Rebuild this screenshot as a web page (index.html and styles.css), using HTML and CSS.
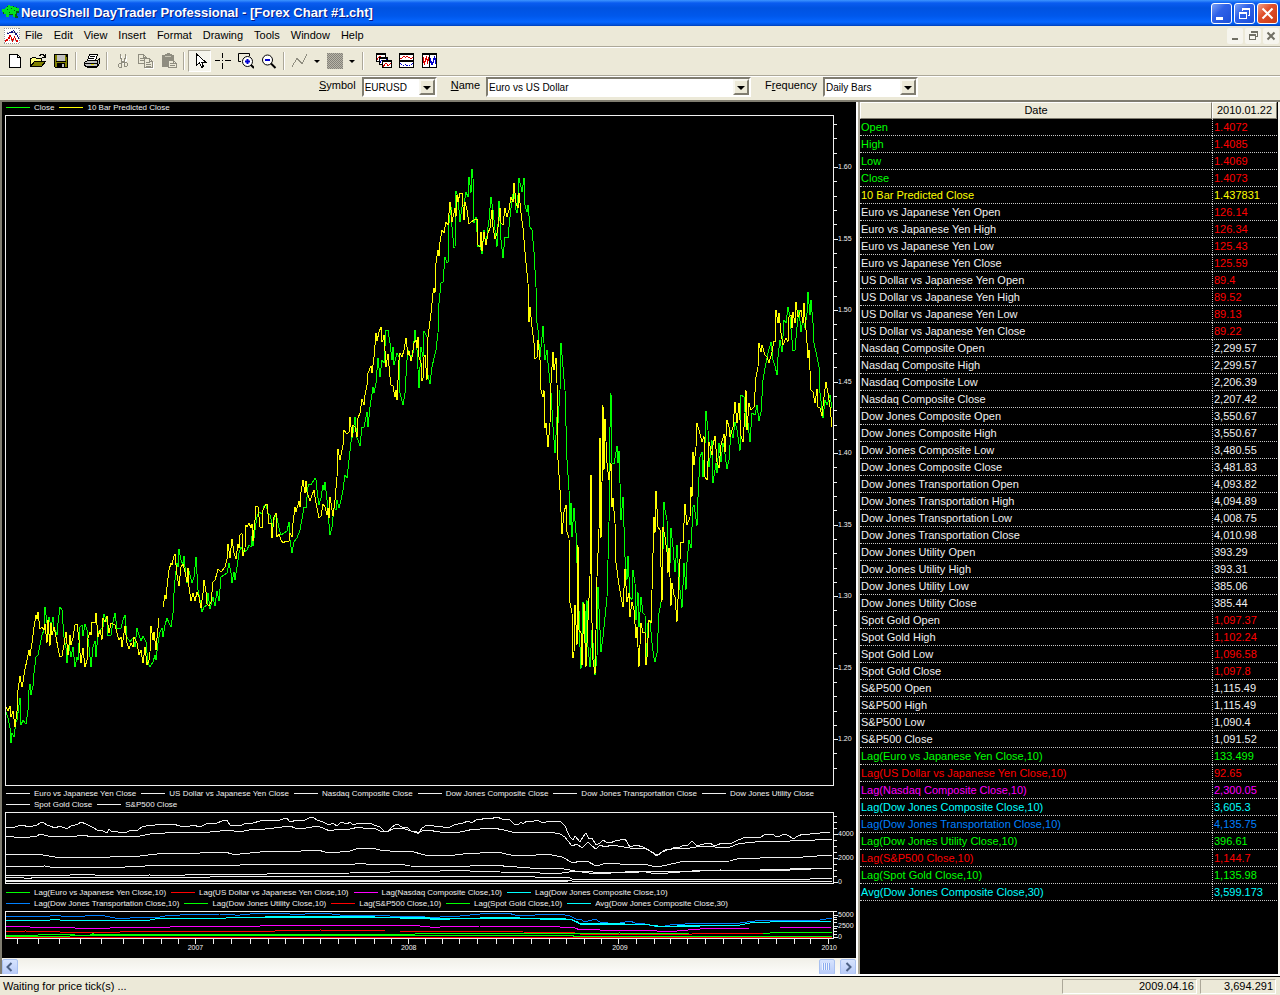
FILE: index.html
```html
<!DOCTYPE html>
<html lang="en">
<head>
    <meta charset="UTF-8">
    <meta name="viewport" content="width=device-width, initial-scale=1.0">
    <title>NeuroShell DayTrader Professional - [Forex Chart #1.cht]</title>
    <link rel="stylesheet" href="styles.css">
</head>
<body>
<div class="window">
    <header class="titlebar">
        <svg class="app-icon" width="18" height="16" viewBox="0 0 18 16">
            <path fill="#0a5a10" d="M5 2h7v1h3v2h2v4h-2v3h1v2h-3v-3H7v2H4v-3H1V7h2V4h2z"/>
            <path fill="#00e020" d="M6 1h2v1h3v1h3v1h3v3h-3v3h-1v3h-2v-3H7v3H4v-3H2V8H0V5h3V4h1V3h2z"/>
            <path fill="#005a10" d="M5 5h1v1H5zM9 4h1v1H9zM12 6h1v1h-1zM7 8h1v1H7z"/>
        </svg>
        <h1>NeuroShell DayTrader Professional - [Forex Chart #1.cht]</h1>
        <div class="window-buttons">
            <button class="win-btn" aria-label="Minimize"><svg width="17" height="17" viewBox="0 0 17 17"><path fill="#fff" d="M3 12h7v3H3z"/></svg></button>
            <button class="win-btn" aria-label="Restore"><svg width="17" height="17" viewBox="0 0 17 17"><path fill="none" stroke="#fff" d="M6.500 5.500v-1h7v6h-2M3.500 8.500h7v5h-7z"/><path fill="#fff" d="M6 3h8v2H6zM3 7h8v2H3z"/></svg></button>
            <button class="win-btn win-close" aria-label="Close"><svg class="smooth" width="17" height="17" viewBox="0 0 17 17"><path stroke="#fff" stroke-width="2" d="M3.500 3.500l10 10M13.500 3.500l-10 10"/></svg></button>
        </div>
    </header>

    <nav class="menubar">
        <svg class="doc-icon" width="16" height="16" viewBox="0 0 16 16">
            <path fill="#fff" d="M0 0h16v16H0z"/>
            <path fill="none" stroke="#999" stroke-dasharray="1 1" d="M0 .5h16M0 15.500h16M.5 0v16M15.500 0v16M3 4.500h11M3 12.500h11"/>
            <path fill="#101080" d="M3 5h2v1H3zM5 4h2v1H5zM7 3h2v2H7zM9 2h1v1H9zM10 3h1v2h-1zM11 5h2v2h-2zM13 7h1v2h-1zM14 9h1v2h-1z"/>
            <path fill="#e00000" d="M1 12h1v2H1zM2 11h2v2H2zM4 9h2v2H4zM5 7h2v2H5zM7 9h1v3H7zM8 11h1v3H8zM9 10h1v2H9zM10 8h1v2h-1zM11 10h1v2h-1zM12 12h2v2h-2z"/>
        </svg>
        <ul>
            <li><a href="#">File</a></li>
            <li><a href="#">Edit</a></li>
            <li><a href="#">View</a></li>
            <li><a href="#">Insert</a></li>
            <li><a href="#">Format</a></li>
            <li><a href="#">Drawing</a></li>
            <li><a href="#">Tools</a></li>
            <li><a href="#">Window</a></li>
            <li><a href="#">Help</a></li>
        </ul>
        <div class="mdi-buttons">
            <button class="mdi-btn" aria-label="Minimize chart"><svg width="14" height="14" viewBox="0 0 14 14"><path fill="#706f64" d="M4 9h6v2H4z"/></svg></button>
            <button class="mdi-btn" aria-label="Restore chart"><svg width="14" height="14" viewBox="0 0 14 14"><path fill="none" stroke="#706f64" d="M5.500 4v-1.500h6v5h-2M3.500 6.500h6v4h-6z"/><path fill="#706f64" d="M5 2h7v2H5zM3 5h7v2H3z"/></svg></button>
            <button class="mdi-btn" aria-label="Close chart"><svg class="smooth" width="14" height="14" viewBox="0 0 14 14"><path stroke="#706f64" stroke-width="2" d="M3.500 3.500l7 7M10.500 3.500l-7 7"/></svg></button>
        </div>
    </nav>

    <div class="toolbar" role="toolbar">
        <button class="tool" aria-label="New"><svg viewBox="0 0 16 16"><path fill="#fff" stroke="#000" d="M2.500 1.500h8l3 3v10h-11z"/><path fill="none" stroke="#000" d="M10.500 1.500v3h3"/></svg></button>
        <button class="tool" aria-label="Open"><svg viewBox="0 0 16 16"><path fill="#ffff80" stroke="#000" d="M.5 13.500v-8h1l1-1h3l1 1h5v3"/><path fill="#808000" stroke="#000" d="M.5 13.500l4-5h11l-4 5z"/><path fill="none" stroke="#000" d="M9 2.500h1v-1h3v1h1v1M15.500 1v3.500H12"/></svg></button>
        <button class="tool" aria-label="Save"><svg viewBox="0 0 16 16"><path fill="#808000" stroke="#000" d="M1.500 1.500h13v13h-12l-1-1z"/><path fill="#c0c0c0" d="M4 2h8v6H4z"/><path fill="#000" d="M4 10h8v4H4zM13 2h1v2h-1zM3 8h10v1H3z"/><path fill="#c0c0c0" d="M9 11h2v3H9z"/></svg></button>
        <span class="sep"></span>
        <button class="tool" aria-label="Print"><svg viewBox="0 0 16 16"><path fill="#fff" stroke="#000" d="M5.500 1.500h8l-2 6h-8z"/><path fill="none" stroke="#000" d="M6 3.500h5M5 5.500h5"/><path fill="#c0c0c0" stroke="#000" d="M.5 9.500l3-2h10l2-2v5l-2 3h-11l-2-1z"/><path stroke="#000" d="M1 10.500h12M13.500 8v5"/><path fill="#e0d800" d="M7 11h3v1H7z"/><path fill="none" stroke="#000" d="M2.500 14.500h9l2-1"/></svg></button>
        <span class="sep"></span>
        <button class="tool" aria-label="Cut"><svg viewBox="0 0 16 16"><path fill="none" stroke="#fff" d="M6.500 3v4l3 4M11.500 3v4l-2 2"/><path fill="none" stroke="#8f8d80" d="M5.500 1v4l1 1v2l3 2M10.500 1v4l-1 1v2l-3 2M4.500 10.500h2v4h-2l-1-1v-2zM9.500 9.500h2l1 1v2l-1 1h-2z"/></svg></button>
        <button class="tool" aria-label="Copy"><svg viewBox="0 0 16 16"><path fill="#ece9d8" stroke="#8f8d80" d="M.5 1.500h5l3 3v6h-8zM5.500 1.500v3h3M2 5.500h4M2 7.500h4"/><path fill="#ece9d8" stroke="#8f8d80" d="M6.500 5.500h5l3 3v6h-8zM11.500 5.500v3h3M8 9.500h4M8 11.500h5M8 13.500h5"/><path stroke="#fff" d="M7 15.500h9M15.500 9v6"/></svg></button>
        <button class="tool" aria-label="Paste"><svg viewBox="0 0 16 16"><path fill="#8f8d80" d="M1 2h3V1h2V0h3v1h2v1h2v5H7v7H1z"/><path fill="#c8c5b5" d="M4 3h6v1H4z"/><path fill="#ece9d8" stroke="#8f8d80" d="M7.500 7.500h5l3 3v4h-8zM12.500 7.500v3h3M9 10.500h3M9 12.500h5"/></svg></button>
        <span class="sep"></span>
        <button class="tool pressed" aria-label="Select" aria-pressed="true"><svg viewBox="0 0 16 16"><path fill="#fff" stroke="#000" d="M4.500 1v11l3-2.500 2 5 2-1-2-4.500h4z"/></svg></button>
        <button class="tool" aria-label="Crosshair"><svg viewBox="0 0 16 16"><path stroke="#000" d="M7.500 0v5M7.500 10v6M0 7.500h5M10 7.500h6M7 7.500h1"/></svg></button>
        <button class="tool" aria-label="Zoom in"><svg class="smooth" viewBox="0 0 16 16"><path fill="none" stroke="#000" d="M3 8.500H.5v-8h11V3"/><circle cx="9.500" cy="8.500" r="5" fill="#fff" stroke="#000"/><path stroke="#0000d0" stroke-width="2" d="M7 8.500h5M9.500 6v5"/><path stroke="#000" stroke-width="2" d="M13 12l3 3"/></svg></button>
        <button class="tool" aria-label="Zoom out"><svg class="smooth" viewBox="0 0 16 16"><circle cx="6.500" cy="7" r="5" fill="#fff" stroke="#000"/><path stroke="#0000d0" stroke-width="2" d="M4 7h5"/><path stroke="#000" stroke-width="2" d="M10 10.500l4.500 4.500"/></svg></button>
        <span class="sep"></span>
        <button class="tool" aria-label="Line style"><svg viewBox="0 0 16 16"><path fill="none" stroke="#8f8d80" d="M0 13.500l5-8 5 5 5-9"/></svg></button>
        <button class="drop" aria-label="Line options"></button>
        <button class="tool" aria-label="Fill"><svg viewBox="0 0 16 16"><path fill="#b8b5a8" d="M0 0h16v16H0z"/><path stroke="#84827a" stroke-width="16" stroke-dasharray="1 1" d="M0 8h16"/><path stroke="#b8b5a8" stroke-dasharray="1 1" d="M0 1.500h16M0 3.500h16M0 5.500h16M0 7.500h16M0 9.500h16M0 11.500h16M0 13.500h16M0 15.500h16"/><path stroke="#84827a" stroke-dasharray="1 1" d="M1 1.500h15M1 3.500h15M1 5.500h15M1 7.500h15M1 9.500h15M1 11.500h15M1 13.500h15M1 15.500h15"/></svg></button>
        <button class="drop" aria-label="Fill options"></button>
        <span class="sep wide"></span>
        <button class="tool" aria-label="Cascade charts"><svg viewBox="0 0 16 16"><path fill="#fff" stroke="#000" d="M.5 1.500h9v7h-9z"/><path fill="#000" d="M0 0h10v2H0z"/><path fill="#e00000" d="M1 5h1v2H1zM2 4h1v1H2zM3 3h2v1H3z"/><path fill="#fff" stroke="#000" d="M3.500 5.500h8v6h-8z"/><path fill="#000" d="M3 4h9v2H3z"/><path fill="#0000d0" d="M4 8h1v2H4zM5 7h2v1H5zM10 6h1v1h-1z"/><path fill="#fff" stroke="#000" d="M6.500 8.500h9v6h-9z"/><path fill="#000" d="M6 7h10v2H6z"/><path fill="#e00000" d="M7 12h1v2H7zM8 11h1v2H8zM9 10h2v1H9zM11 11h1v2h-1zM12 12h1v1h-1zM13 11h1v1h-1zM14 10h1v1h-1z"/></svg></button>
        <button class="tool" aria-label="Tile horizontally"><svg viewBox="0 0 16 16"><path fill="#fff" stroke="#000" d="M.5 1.500h14v13H.5z"/><path fill="#000" d="M0 0h15v2H0zM0 7h15v2H0z"/><path fill="#e00000" d="M1 5h2v1H1zM3 4h1v1H3zM4 3h2v1H4zM6 4h1v1H6zM7 3h2v1H7zM9 4h2v1H9zM11 5h2v1h-2zM13 4h1v1h-1z"/><path fill="#0000d0" d="M1 10h1v1H1zM2 11h1v1H2zM4 12h1v1H4zM6 11h1v1H6zM7 12h2v1H7zM10 12h1v1h-1zM12 11h1v1h-1zM13 10h1v1h-1z"/></svg></button>
        <button class="tool" aria-label="Tile vertically"><svg viewBox="0 0 16 16"><path fill="#fff" stroke="#000" d="M.5 1.500h14v13H.5z"/><path fill="#000" d="M0 0h15v2H0zM7 0h1v15H7z"/><path fill="#e00000" d="M1 4h1v6H1zM2 8h1v4H2zM3 5h1v4H3zM4 3h1v4H4zM5 6h1v5H5zM6 4h1v4H6z"/><path fill="#0000d0" d="M8 5h1v5H8zM9 8h1v4H9zM10 9h1v3h-1zM11 5h1v5h-1zM12 3h1v4h-1zM13 5h1v6h-1z"/></svg></button>
    </div>

    <form class="symbolbar">
        <label for="symbol"><u>S</u>ymbol</label>
        <span class="combo combo-symbol"><select id="symbol"><option>EURUSD</option></select></span>
        <label for="name"><u>N</u>ame</label>
        <span class="combo combo-name"><select id="name"><option>Euro vs US Dollar</option></select></span>
        <label for="frequency">F<u>r</u>equency</label>
        <span class="combo combo-frequency"><select id="frequency"><option>Daily Bars</option></select></span>
    </form>

    <main class="workspace">
        <section class="chart-pane">
            <div class="charts">
                <ul class="legend">
                    <li class="green"><span>Close</span></li>
                    <li class="yellow"><span>10 Bar Predicted Close</span></li>
                </ul>
                <div class="chart chart-main">
                    <svg class="plot" viewBox="6 116 827 669" preserveAspectRatio="none">
                        <polyline class="green" points="6,712 8,718 10,728 11,743 12,733 14,737 16,722 17,720 20,698 21,725 23,720 26,724 28,710 29,690 30,684 31,695 33,686 34,673 36,657 38,655 40,645 42,635 44,630 45,607 47,623 48,635 49,617 51,627 53,617 54,627 57,635 58,623 60,607 62,610 64,637 66,648 67,663 69,645 71,657 73,647 75,667 77,657 78,660 80,627 82,625 83,636 85,624 87,630 89,647 91,667 93,647 95,641 96,657 98,633 100,630 103,627 104,614 107,622 108,636 111,635 113,622 115,613 117,629 121,628 123,620 125,615 127,637 130,642 133,638 135,647 137,628 139,635 141,641 143,636 146,642 148,663 150,667 153,662 155,655 156,660 158,643 160,632 162,628 163,637 165,625 167,618 169,623 171,627 173,613 174,593 175,580 177,563 178,567 179,549 181,560 183,565 184,556 186,577 187,583 189,571 192,583 194,577 196,557 198,590 200,600 202,612 204,607 207,605 208,593 210,609 213,597 215,606 217,591 219,601 221,577 224,575 227,573 229,563 231,573 232,583 234,572 235,580 237,567 239,553 241,547 244,552 247,550 249,545 251,547 252,536 253,546 255,530 257,517 259,512 262,514 264,506 266,504 268,513 270,515 273,527 274,520 276,513 279,528 281,535 284,533 287,531 289,522 290,540 292,553 294,542 297,538 300,530 303,513 304,507 306,508 308,487 309,484 311,485 315,478 316,480 317,490 319,505 321,498 323,485 324,490 325,482 327,500 328,513 330,535 332,527 334,508 336,510 337,500 339,508 341,500 343,490 345,475 347,478 349,460 351,442 353,433 355,417 357,438 358,440 360,446 362,427 364,427 367,412 368,427 370,407 373,387 374,393 376,383 378,358 380,377 382,360 384,363 386,330 388,330 390,343 392,360 393,347 394,365 397,353 399,357 400,393 403,405 405,393 407,360 408,350 411,357 413,353 415,330 417,350 419,388 421,347 423,357 424,331 427,337 428,375 430,384 432,367 434,358 436,350 438,333 439,303 441,283 443,282 445,257 447,263 448,262 449,223 451,207 452,227 454,248 455,247 456,191 458,197 460,222 462,207 464,205 466,192 468,197 469,177 471,193 472,169 473,178 474,223 476,217 478,247 480,245 482,254 484,230 486,245 488,227 489,220 491,197 493,210 495,230 497,247 499,201 501,240 503,258 505,237 508,238 509,227 511,208 514,187 516,210 517,213 519,178 522,192 524,178 525,205 527,212 528,205 530,227 532,230 534,252 536,287 537,323 538,330 540,357 542,337 543,326 545,360 547,350 548,363 551,393 553,427 555,453 557,417 558,423 560,390 561,343 563,367 565,390 567,460 569,490 570,525 571,503 572,537 574,508 576,533 577,563 579,610 580,647 581,669 583,602 585,610 586,650 587,600 588,647 590,667 592,630 593,643 595,675 597,657 598,587 600,630 601,652 603,637 606,607 607,597 609,523 610,427 611,393 612,463 614,464 617,446 618,463 619,451 620,483 621,520 623,497 625,557 627,580 628,556 630,597 632,600 633,570 635,583 636,620 638,592 639,627 641,597 643,613 645,615 646,663 648,623 650,620 652,643 654,658 655,662 657,653 659,613 662,597 664,502 665,510 667,520 668,560 670,563 671,528 673,547 675,572 677,545 678,563 680,590 682,608 684,563 686,590 687,562 689,540 691,548 693,507 694,505 697,526 698,497 700,457 702,452 703,477 705,443 706,411 708,430 709,467 712,440 713,483 716,463 717,473 719,443 721,462 723,443 724,447 727,469 729,460 731,430 733,438 735,422 737,430 740,451 741,395 744,397 746,427 748,423 750,442 752,413 755,415 757,405 759,421 761,412 763,380 765,368 768,353 771,342 773,360 775,366 777,375 778,357 780,340 782,352 784,320 786,323 788,307 790,317 792,340 793,351 795,350 797,327 799,310 801,332 803,318 805,328 807,313 808,292 810,315 811,300 813,323 814,343 817,357 819,367 820,393 823,418 825,400 827,405 830,395 832,408"/>
                        <polyline class="yellow" points="6,707 8,711 10,706 11,717 13,711 15,727 17,711 18,690 20,676 22,687 23,682 25,669 27,660 29,650 30,656 32,643 34,627 36,615 37,619 38,612 40,629 42,627 44,630 45,624 47,643 48,620 49,634 50,646 51,623 52,635 54,627 56,637 58,648 60,657 62,656 64,645 66,632 68,655 70,635 71,645 73,638 75,625 77,624 79,640 80,653 81,663 83,648 85,667 87,660 88,638 90,632 91,635 92,622 95,623 96,613 98,637 100,630 102,640 103,618 105,622 107,616 109,633 111,623 115,625 117,633 119,640 121,637 122,647 125,626 127,643 129,649 131,643 133,647 134,637 137,643 139,655 141,650 143,663 145,647 147,665 149,660 150,652 151,626 153,640 154,632 156,650 157,638 159,618"/>
                        <polyline class="yellow" points="163,607 165,595 166,599 167,587 169,570 171,563 172,565 174,556 175,554 177,575 179,586 181,567 183,564 185,572 187,582 188,568 189,587 191,601 193,593 195,601 197,592 199,597 201,608 203,593 204,580 206,592 207,604 209,606 211,602 213,582 215,580 217,573 218,569 221,572 225,567 227,559 228,544 230,558 232,539 234,553 236,559 238,544 239,548 240,535 242,533 243,556 245,548 246,525 247,527 249,523 251,528 252,524 253,541 255,520 256,506 258,507 260,527 262,528 263,510 266,504 267,504 269,524 271,523 272,538 274,517 276,513 277,537 279,534 281,540 283,543 286,541 289,541 290,533 292,537 293,523 295,507 296,512 299,501 300,507 301,492 303,480 305,493 306,481 307,492 310,501 312,495 314,490 316,503 319,518 321,516 323,504 325,507 327,515 328,508 329,518 330,497 333,516 335,500 337,477 338,449 340,460 341,455 343,445 344,430 347,434 349,432 350,417 352,437 353,425 355,427 357,437 358,418 360,413 362,399 364,405 365,395 367,385 368,373 371,366 372,373 374,357 376,333 377,341 379,332 381,327 382,342 383,340 384,335 386,367 388,354 390,377 391,385 393,386 395,397 396,390 397,400 399,360 400,353 402,357 404,350 406,338 408,355 409,351 411,361 412,357 414,343 416,340 417,348 418,337 419,357 421,363 422,381 423,378 424,357 425,355 427,380 428,337 431,313 433,293 434,288 435,293 436,263 438,250 439,256 440,242 442,230 444,233 446,222 448,225 450,202 451,210 452,222 455,208 456,217 457,195 458,202 460,193 462,193 464,220 465,202 467,210 469,224 471,222 474,220 477,219 478,245 480,247 481,232 482,251 484,232 486,245 488,233 490,228 492,210 493,227 495,239 497,233 498,227 500,208 501,223 503,225 505,208 507,217 509,210 511,197 513,202 514,183 516,203 518,208 519,193 521,213 523,228 524,240 526,263 528,283 529,322 530,307 532,327 534,343 535,359 537,357 538,340 540,360 541,390 543,397 544,390 545,428 546,423 548,447 550,423 551,383 553,352 554,370 556,358 557,383 558,460 560,490 562,534 564,512 566,505 567,532 569,538 570,603 572,613 573,658 574,652 575,605 576,625 577,645 578,545 579,630 581,633 582,665 584,603 585,643 586,667 588,620 590,577 591,475 592,623 593,660 595,674 596,630 597,577 599,530 600,438 601,538 602,483 603,405 604,470 605,419 607,463 609,480 611,463 612,507 613,498 615,523 616,563 619,585 621,597 623,607 625,569 627,602 629,593 630,617 632,602 634,610 636,638 637,627 639,667 641,623 643,633 645,632 646,665 647,657 649,620 651,623 652,590 654,517 655,533 656,491 658,527 660,530 662,602 663,527 665,537 667,552 668,573 669,548 671,606 672,583 674,595 675,597 677,622 679,577 681,542 683,543 685,504 687,525 690,517 691,487 692,497 693,452 694,465 696,447 697,423 699,430 702,442 704,436 705,477 707,480 709,442 712,455 713,445 715,436 717,462 719,468 721,445 724,434 725,452 727,420 729,427 730,437 733,427 735,402 737,423 739,403 741,436 743,442 745,413 746,390 747,430 749,403 751,410 754,407 756,377 758,367 759,343 761,352 762,345 765,355 767,357 769,363 772,352 774,341 775,342 776,310 778,323 779,313 781,333 783,345 786,338 788,342 789,317 791,315 792,328 793,312 795,323 796,302 798,317 801,310 803,323 804,303 806,330 807,343 808,358 809,350 811,390 813,392 815,403 817,389 818,407 820,408 822,416 824,397 826,382 828,393 830,407 832,427"/>
                    </svg>
                    <div class="axis">
                        <svg class="ticks" viewBox="0 115 4 671" preserveAspectRatio="none"><path d="M0 167.500h4M0 239.500h4M0 310.500h4M0 382.500h4M0 453.500h4M0 525.500h4M0 596.500h4M0 668.500h4M0 739.500h4M0 124.500h3M0 138.500h3M0 153.500h3M0 181.500h3M0 196.500h3M0 210.500h3M0 224.500h3M0 253.500h3M0 267.500h3M0 281.500h3M0 296.500h3M0 324.500h3M0 339.500h3M0 353.500h3M0 367.500h3M0 396.500h3M0 410.500h3M0 425.500h3M0 439.500h3M0 467.500h3M0 482.500h3M0 496.500h3M0 510.500h3M0 539.500h3M0 553.500h3M0 568.500h3M0 582.500h3M0 610.500h3M0 625.500h3M0 639.500h3M0 653.500h3M0 682.500h3M0 696.500h3M0 711.500h3M0 725.500h3M0 753.500h3M0 768.500h3"/></svg>
                        <div class="axis-labels"><span>1.60</span><span>1.55</span><span>1.50</span><span>1.45</span><span>1.40</span><span>1.35</span><span>1.30</span><span>1.25</span><span>1.20</span></div>
                    </div>
                </div>

                <ul class="legend">
                    <li>Euro vs Japanese Yen Close</li>
                    <li>US Dollar vs Japanese Yen Close</li>
                    <li>Nasdaq Composite Close</li>
                    <li>Dow Jones Composite Close</li>
                    <li>Dow Jones Transportation Close</li>
                    <li>Dow Jones Utility Close</li>
                    <li>Spot Gold Close</li>
                    <li>S&amp;P500 Close</li>
                </ul>
                <div class="chart chart-inputs">
                    <svg class="plot" viewBox="6 813 827 70" preserveAspectRatio="none">
                        <polyline points="6,827 12,828 18,826 22,825 29,827 33,826 37,825 40,823 43,822 47,825 50,826 55,828 60,826 67,829 71,826 75,825 78,824 81,822 86,824 90,826 94,828 97,830 103,831 107,833 109,829 112,832 115,831 121,833 127,832 131,830 138,830 142,827 150,825 153,826 157,824 165,825 173,824 180,826 187,827 193,825 200,827 206,824 217,823 222,821 227,820 230,825 240,826 246,823 253,823 260,821 267,820 276,821 287,818 290,822 297,820 303,821 309,818 313,817 317,820 323,822 329,825 333,823 337,826 341,822 347,824 350,822 353,825 360,823 370,823 374,825 380,827 384,831 388,832 392,827 397,824 402,827 408,828 412,832 416,831 418,834 422,828 427,825 434,826 440,826 446,828 450,827 454,825 458,824 463,823 468,821 472,823 477,819 480,820 485,818 490,819 497,817 502,819 510,820 514,824 518,825 521,822 523,824 527,821 532,822 536,820 544,823 548,821 557,822 560,821 565,826 568,833 570,837 573,840 575,836 580,842 583,837 586,833 589,839 592,838 596,845 600,843 603,840 606,842 610,843 615,841 620,840 625,839 630,847 636,845 643,847 650,851 657,856 662,852 667,849 671,850 675,847 680,847 684,845 687,846 692,841 697,846 704,844 710,843 713,845 717,845 722,843 730,844 736,841 743,838 750,837 760,838 764,835 768,834 772,834 777,837 785,834 789,836 793,839 798,836 803,834 810,834 820,833 830,832"/>
                        <polyline points="6,836 14,837 30,837 37,836 40,834 52,837 66,836 72,837 82,835 93,837 100,836 120,836 140,836 150,834 165,833 175,832 200,833 220,831 227,830 240,832 253,829 265,829 274,828 290,826 295,828 300,829 318,826 325,829 330,831 338,829 350,829 359,827 367,829 374,828 380,831 388,831 393,829 397,828 405,829 411,831 418,833 422,831 427,830 440,832 450,832 455,833 465,831 474,829 480,829 493,828 504,830 512,832 520,833 530,832 550,832 560,834 565,837 568,841 572,846 577,844 582,848 588,842 592,846 596,849 600,845 605,847 612,845 630,848 645,848 657,855 662,852 667,850 675,848 690,848 702,846 715,847 730,847 738,844 745,843 765,841 775,841 780,842 790,841 815,840 832,839"/>
                        <polyline points="6,854 15,855 37,854 55,857 70,857 92,858 110,857 140,856 165,853 200,853 210,852 225,852 232,854 240,854 250,853 270,851 285,852 318,850 325,852 330,853 350,851 356,849 372,848 380,850 390,851 410,851 425,855 447,856 463,854 497,852 511,855 525,856 547,854 562,857 573,863 580,861 587,861 596,866 607,863 620,864 643,864 657,867 667,865 680,862 730,861 737,859 760,858 783,857 794,858 803,857 832,855"/>
                        <polyline points="6,867 45,866 50,867 125,867 165,865 240,865 260,864 290,864 340,865 355,864 362,863 370,865 400,864 410,866 450,867 490,865 530,868 557,868 570,870 575,871 590,871 596,873 640,872 657,871 680,872 705,870 760,870 790,869 805,868 832,868"/>
                        <polyline points="6,876 12,875 70,875 90,874 100,876 150,875 155,876 185,875 350,873 370,872 378,873 402,871 420,871 440,871 455,870 470,871 500,872 540,873 556,874 575,871 596,874 640,871 657,874 680,872 720,870 760,871 790,870 832,868"/>
                        <polyline points="6,877 24,878 28,879 35,877 210,877 215,876 290,876 410,876 530,876 535,877 568,877 572,879 655,879 660,880 668,879 810,879 815,878 832,878"/>
                        <polyline points="6,880 560,880 572,881 832,881"/>
                        <polyline points="6,881 568,881"/>
                    </svg>
                    <div class="axis">
                        <svg class="ticks" viewBox="0 812 4 72" preserveAspectRatio="none"><path d="M0 816.500h3M0 822.500h3M0 828.500h3M0 834.500h4M0 840.500h3M0 846.500h3M0 852.500h3M0 858.500h4M0 864.500h3M0 870.500h3M0 876.500h3M0 882.500h4"/></svg>
                        <div class="axis-labels"><span>4000</span><span>2000</span><span>0</span></div>
                    </div>
                </div>

                <ul class="legend">
                    <li class="green"><span>Lag(Euro vs Japanese Yen Close,10)</span></li>
                    <li class="red"><span>Lag(US Dollar vs Japanese Yen Close,10)</span></li>
                    <li class="magenta"><span>Lag(Nasdaq Composite Close,10)</span></li>
                    <li class="cyan"><span>Lag(Dow Jones Composite Close,10)</span></li>
                    <li class="row-end"></li>
                    <li class="blue"><span>Lag(Dow Jones Transportation Close,10)</span></li>
                    <li class="green"><span>Lag(Dow Jones Utility Close,10)</span></li>
                    <li class="red"><span>Lag(S&amp;P500 Close,10)</span></li>
                    <li class="green"><span>Lag(Spot Gold Close,10)</span></li>
                    <li class="cyan"><span>Avg(Dow Jones Composite Close,30)</span></li>
                </ul>
                <div class="chart chart-lags">
                    <svg class="plot" viewBox="6 912 827 26" preserveAspectRatio="none">
                        <polyline class="blue" points="6,917 15,916 20,917 35,916 50,916 52,915 60,915 62,917 80,916 85,916 95,915 105,916 115,918 130,918 150,917 160,917 170,915 180,915 220,914 230,914 235,915 240,915 250,914 270,913 290,914 305,914 325,913 332,914 340,915 358,916 380,915 400,917 410,916 425,917 440,917 460,916 480,914 508,913 515,915 525,916 535,915 560,914 570,916 578,920 580,919 585,922 595,919 600,922 615,924 630,921 635,923 645,924 658,927 665,926 670,925 685,924 700,923 710,924 740,923 755,921 770,920 785,921 800,920 820,920 832,918"/>
                        <polyline class="cyan" points="6,920 50,920 55,919 60,920 150,920 155,919 180,918 187,919 265,917 290,916 330,916 360,916 375,917 405,917 430,918 440,919 480,918 490,917 510,917 520,918 540,919 570,919 578,922 580,924 585,923 600,923 650,925 665,927 690,925 740,925 750,923 770,922 832,921"/>
                        <polyline class="cyan" points="260,918 275,917 300,917 370,917 430,919 450,919 480,918 520,918 560,918 572,920 580,924 600,924 650,925 660,927 740,925"/>
                        <polyline class="magenta" points="6,927 25,926 30,927 70,927 75,928 110,928 130,927 170,927 175,926 260,926 270,925 280,926 295,925 320,926 345,925 400,925 420,926 430,927 440,927 480,926 520,926 525,927 545,926 560,927 575,928 580,930 595,929 605,931 620,930 640,930 657,931 665,932 700,929 750,928 780,928 832,927"/>
                        <polyline class="red" points="6,932 25,931 60,932 120,932 125,931 275,931 280,930 300,931 320,930 385,931 400,931 520,931 523,932 575,933 580,934 640,934 692,934 700,933 770,933 800,932 832,932"/>
                        <polyline class="green" points="6,935 38,935 40,934 70,934 75,935 90,935 92,934 210,935 215,934 415,934 418,933 550,933 560,934 620,933 625,934 690,933 770,933 800,932 832,932"/>
                        <polyline class="green" points="6,936 70,936 75,935 570,935 577,937 832,936"/>
                        <polyline class="red" points="6,937 832,937"/>
                    </svg>
                    <div class="axis">
                        <svg class="ticks" viewBox="0 911 4 28" preserveAspectRatio="none"><path d="M0 911.500h3M0 915.500h4M0 917.500h3M0 919.500h3M0 922.500h3M0 926.500h4M0 928.500h3M0 931.500h3M0 934.500h3M0 937.500h4"/></svg>
                        <div class="axis-labels"><span>5000</span><span>2500</span><span>0</span></div>
                    </div>
                </div>
                <div class="time-axis">
                    <svg class="time-ticks" viewBox="5 0 829 5" preserveAspectRatio="none"><path d="M17.500 0v5M38.500 0v5M59.500 0v5M80.500 0v5M101.500 0v5M123.500 0v5M143.500 0v5M161.500 0v5M178.500 0v5M195.500 0v5M213.500 0v5M231.500 0v5M250.500 0v5M268.500 0v5M285.500 0v5M303.500 0v5M320.500 0v5M338.500 0v5M355.500 0v5M374.500 0v5M391.500 0v5M408.500 0v5M425.500 0v5M442.500 0v5M459.500 0v5M477.500 0v5M496.500 0v5M513.500 0v5M531.500 0v5M549.500 0v5M566.500 0v5M584.500 0v5M601.500 0v5M618.500 0v5M636.500 0v5M654.500 0v5M670.500 0v5M687.500 0v5M705.500 0v5M723.500 0v5M741.500 0v5M758.500 0v5M776.500 0v5M794.500 0v5M810.500 0v5M828.500 0v5"/></svg>
                    <div class="years"><span>2007</span><span>2008</span><span>2009</span><span>2010</span></div>
                </div>
            </div>
            <div class="scrollbar">
                <button class="scroll-btn" aria-label="Scroll left"><svg width="16" height="16" viewBox="0 0 16 16"><path fill="none" stroke="#4d6185" stroke-width="2" d="M9.500 4l-4 4 4 4"/></svg></button>
                <button class="scroll-btn scroll-thumb" aria-label="Scroll position"><svg width="16" height="16" viewBox="0 0 16 16"><path stroke="#8cacf0" d="M4.500 4v7M6.500 4v7M8.500 4v7M10.500 4v7"/><path stroke="#eef4fe" d="M3.500 4v7M5.500 4v7M7.500 4v7M9.500 4v7"/></svg></button>
                <button class="scroll-btn" aria-label="Scroll right"><svg width="16" height="16" viewBox="0 0 16 16"><path fill="none" stroke="#4d6185" stroke-width="2" d="M6.500 4l4 4-4 4"/></svg></button>
            </div>
        </section>

        <section class="data-pane">
            <table>
                <thead>
                    <tr><th>Date</th><th class="value">2010.01.22</th></tr>
                </thead>
                <tbody>
                    <tr><td class="green">Open</td><td class="red">1.4072</td></tr>
                    <tr><td class="green">High</td><td class="red">1.4085</td></tr>
                    <tr><td class="green">Low</td><td class="red">1.4069</td></tr>
                    <tr><td class="green">Close</td><td class="red">1.4073</td></tr>
                    <tr><td class="yellow">10 Bar Predicted Close</td><td class="yellow">1.437831</td></tr>
                    <tr><td>Euro vs Japanese Yen Open</td><td class="red">126.14</td></tr>
                    <tr><td>Euro vs Japanese Yen High</td><td class="red">126.34</td></tr>
                    <tr><td>Euro vs Japanese Yen Low</td><td class="red">125.43</td></tr>
                    <tr><td>Euro vs Japanese Yen Close</td><td class="red">125.59</td></tr>
                    <tr><td>US Dollar vs Japanese Yen Open</td><td class="red">89.4</td></tr>
                    <tr><td>US Dollar vs Japanese Yen High</td><td class="red">89.52</td></tr>
                    <tr><td>US Dollar vs Japanese Yen Low</td><td class="red">89.13</td></tr>
                    <tr><td>US Dollar vs Japanese Yen Close</td><td class="red">89.22</td></tr>
                    <tr><td>Nasdaq Composite Open</td><td>2,299.57</td></tr>
                    <tr><td>Nasdaq Composite High</td><td>2,299.57</td></tr>
                    <tr><td>Nasdaq Composite Low</td><td>2,206.39</td></tr>
                    <tr><td>Nasdaq Composite Close</td><td>2,207.42</td></tr>
                    <tr><td>Dow Jones Composite Open</td><td>3,550.67</td></tr>
                    <tr><td>Dow Jones Composite High</td><td>3,550.67</td></tr>
                    <tr><td>Dow Jones Composite Low</td><td>3,480.55</td></tr>
                    <tr><td>Dow Jones Composite Close</td><td>3,481.83</td></tr>
                    <tr><td>Dow Jones Transportation Open</td><td>4,093.82</td></tr>
                    <tr><td>Dow Jones Transportation High</td><td>4,094.89</td></tr>
                    <tr><td>Dow Jones Transportation Low</td><td>4,008.75</td></tr>
                    <tr><td>Dow Jones Transportation Close</td><td>4,010.98</td></tr>
                    <tr><td>Dow Jones Utility Open</td><td>393.29</td></tr>
                    <tr><td>Dow Jones Utility High</td><td>393.31</td></tr>
                    <tr><td>Dow Jones Utility Low</td><td>385.06</td></tr>
                    <tr><td>Dow Jones Utility Close</td><td>385.44</td></tr>
                    <tr><td>Spot Gold Open</td><td class="red">1,097.37</td></tr>
                    <tr><td>Spot Gold High</td><td class="red">1,102.24</td></tr>
                    <tr><td>Spot Gold Low</td><td class="red">1,096.58</td></tr>
                    <tr><td>Spot Gold Close</td><td class="red">1,097.8</td></tr>
                    <tr><td>S&amp;P500 Open</td><td>1,115.49</td></tr>
                    <tr><td>S&amp;P500 High</td><td>1,115.49</td></tr>
                    <tr><td>S&amp;P500 Low</td><td>1,090.4</td></tr>
                    <tr><td>S&amp;P500 Close</td><td>1,091.52</td></tr>
                    <tr><td class="green">Lag(Euro vs Japanese Yen Close,10)</td><td class="green">133.499</td></tr>
                    <tr><td class="red">Lag(US Dollar vs Japanese Yen Close,10)</td><td class="red">92.65</td></tr>
                    <tr><td class="magenta">Lag(Nasdaq Composite Close,10)</td><td class="magenta">2,300.05</td></tr>
                    <tr><td class="cyan">Lag(Dow Jones Composite Close,10)</td><td class="cyan">3,605.3</td></tr>
                    <tr><td class="blue">Lag(Dow Jones Transportation Close,10)</td><td class="blue">4,135.75</td></tr>
                    <tr><td class="green">Lag(Dow Jones Utility Close,10)</td><td class="green">396.61</td></tr>
                    <tr><td class="red">Lag(S&amp;P500 Close,10)</td><td class="red">1,144.7</td></tr>
                    <tr><td class="green">Lag(Spot Gold Close,10)</td><td class="green">1,135.98</td></tr>
                    <tr><td class="cyan">Avg(Dow Jones Composite Close,30)</td><td class="cyan">3,599.173</td></tr>
                </tbody>
            </table>
        </section>
    </main>

    <footer class="statusbar">
        <span class="status-text">Waiting for price tick(s) ...</span>
        <span class="status-cell status-date">2009.04.16</span>
        <span class="status-cell status-value">3,694.291</span>
    </footer>
    <div class="taskbar-edge"></div>
</div>
</body>
</html>
```
FILE: styles.css
```css
/* General styles */
*,
*::before {
    box-sizing: border-box;
}

body {
    margin: 0;
    font-family: "Liberation Sans", Arial, sans-serif;
    font-size: 11px;
    color: #000;
    background-color: #ece9d8;
}

button {
    padding: 0;
    border: none;
    background: none;
    font: inherit;
}

ul {
    list-style: none;
    margin: 0;
    padding: 0;
}

svg {
    display: block;
    shape-rendering: crispEdges;
}

svg.smooth {
    shape-rendering: auto;
}

.window {
    display: flex;
    flex-direction: column;
    min-height: 100vh;
}

/* Series colors */
.green { color: #00ff00; }
.yellow { color: #ffff00; }
.red { color: #ff0000; }
.magenta { color: #ff00ff; }
.cyan { color: #00ffff; }
.blue { color: #0080ff; }

/* Title bar */
.titlebar {
    display: flex;
    align-items: center;
    height: 26px;
    padding: 0 2px;
    background: linear-gradient(#3d95ff 0, #0a5cf0 3px, #0053e1 8px, #0058ec 16px, #0566ff 22px, #0050d8 25px, #003cb0 26px);
}

.titlebar h1 {
    flex: 1;
    margin: 0 0 0 1px;
    font-size: 13px;
    line-height: 26px;
    color: #fff;
    text-shadow: 1px 1px #0a1883;
}

.app-icon {
    margin-bottom: 2px;
}

.window-buttons {
    display: flex;
    gap: 2px;
}

.win-btn {
    width: 21px;
    height: 21px;
    padding: 1px;
    border: 1px solid #fff;
    border-radius: 3px;
    background: linear-gradient(135deg, #7da2f5, #2f62e8 40%, #1c4fd8);
}

.win-close {
    background: linear-gradient(135deg, #f0a088, #e0502c 40%, #c83a14);
}

/* Menu bar */
.menubar {
    display: flex;
    align-items: center;
    height: 20px;
    padding: 0 1px 0 4px;
}

.menubar ul {
    display: flex;
    flex: 1;
    gap: 11px;
    margin-left: 5px;
    padding-bottom: 2px;
}

.menubar a {
    color: #000;
    text-decoration: none;
}

.mdi-buttons {
    display: flex;
    gap: 2px;
}

.mdi-btn {
    width: 16px;
    height: 16px;
    padding: 1px;
    border-radius: 2px;
    background-color: #f6f5ee;
}

/* Toolbar */
.toolbar,
.symbolbar {
    display: flex;
    border-top: 1px solid #aca899;
    box-shadow: inset 0 1px #fff;
}

.toolbar {
    align-items: center;
    height: 29px;
    padding: 0 3px;
}

.tool {
    display: flex;
    justify-content: center;
    align-items: center;
    width: 23px;
    height: 22px;
}

.tool svg {
    width: 16px;
    height: 16px;
}

.tool.pressed {
    border: 1px solid;
    border-color: #aca899 #fff #fff #aca899;
    background-color: #f5f4ec;
}

.drop {
    display: flex;
    justify-content: center;
    align-items: center;
    width: 12px;
    height: 22px;
}

.drop::after,
.combo::after {
    content: "";
    border: solid transparent;
    border-width: 3px 3px 0;
    border-top-color: #000;
}

.sep {
    width: 2px;
    height: 18px;
    margin: 0 3px;
    border-left: 1px solid #aca899;
    border-right: 1px solid #fff;
}

.sep.wide {
    margin: 0 8px 0 4px;
}

/* Symbol selection */
.symbolbar {
    align-items: flex-start;
    height: 25px;
    padding: 1px 0 0 319px;
}

.symbolbar label {
    margin: 2px 6px 0 0;
}

.combo {
    display: flex;
    position: relative;
    height: 20px;
    margin-right: 14px;
    border: 2px solid;
    border-color: #807d70 #fff #fff #807d70;
    background-color: #fff;
    font-size: 10px;
}

.combo select {
    flex: 1;
    min-width: 0;
    padding: 0 16px 0 1px;
    border: none;
    background: none;
    appearance: none;
    font: inherit;
    color: #000;
}

/* Drop button at the right end of the box */
.combo::before {
    content: "";
    position: absolute;
    top: 0;
    right: 0;
    width: 16px;
    height: 16px;
    border: 2px solid;
    border-color: #f8f7f0 #807d70 #807d70 #f8f7f0;
    background-color: #ece9d8;
    pointer-events: none;
}

.combo::after {
    position: absolute;
    top: 7px;
    right: 4px;
    border-width: 4px 4px 0;
    pointer-events: none;
}

.combo-symbol { width: 75px; }
.combo-name { width: 265px; }
.combo-frequency { width: 95px; }

/* Workspace */
.workspace {
    display: flex;
    flex: 1;
    border-top: 2px solid #807d70;
}

.chart-pane {
    display: flex;
    flex-direction: column;
    flex: 1;
    border-left: 2px solid #807d70;
    border-right: 2px solid #fff;
}

.charts {
    display: flex;
    flex-direction: column;
    flex: 1;
    padding: 0 0 0 3px;
    background-color: #000;
    color: #f0f0f0;
    font-size: 8px;
    line-height: 11px;
}

.legend {
    display: flex;
    flex-wrap: wrap;
    column-gap: 5px;
    padding: 0 1px;
}

.legend li {
    display: flex;
    align-items: center;
    gap: 4px;
    white-space: nowrap;
}

.legend li::before {
    content: "";
    width: 24px;
    height: 1px;
    background-color: currentColor;
}

.legend span {
    color: #f0f0f0;
}

.legend .row-end {
    width: 100%;
    height: 0;
    overflow: hidden;
}

.chart {
    display: flex;
    margin-top: 2px;
}

.chart-main {
    flex: 1;
    min-height: 200px;
    margin-bottom: 2px;
}

.chart-inputs {
    height: 72px;
    margin-bottom: 3px;
}

.chart-lags {
    height: 28px;
}

.plot {
    flex: 1;
    min-width: 0;
    height: 100%;
    border: 1px solid #f0f0f0;
}

.chart-main .plot {
    height: auto;
}

.plot polyline {
    fill: none;
    stroke: currentColor;
    vector-effect: non-scaling-stroke;
}

.axis {
    display: flex;
    width: 22px;
}

.ticks {
    width: 4px;
    height: 100%;
}

.ticks path,
.time-ticks path {
    stroke: #f0f0f0;
}

.axis-labels {
    display: flex;
    flex-direction: column;
    justify-content: space-between;
    font-size: 7px;
    line-height: 8px;
}

.chart-main .axis-labels {
    padding: 48px 0 43px;
}

.chart-inputs .axis-labels {
    padding: 18px 0 0;
    margin-bottom: -2px;
}

.chart-lags .axis-labels {
    margin-bottom: -2px;
}

.time-axis {
    height: 19px;
    padding-right: 22px;
}

.time-ticks {
    width: 100%;
    height: 5px;
}

.years {
    display: flex;
    margin-right: -3px;
    font-size: 7px;
    line-height: 8px;
    text-align: right;
}

.years span:nth-child(1) { flex: 198; }
.years span:nth-child(2) { flex: 213; }
.years span:nth-child(3) { flex: 211; }
.years span:nth-child(4) { flex: 209; }

/* Scroll bar */
.scrollbar {
    display: flex;
    height: 18px;
    background: linear-gradient(#f0efe8, #fefefc);
}

.scroll-btn {
    width: 16px;
    height: 16px;
    margin: 1px 0;
    border: 1px solid #a8c0f0;
    border-radius: 2px;
    background: linear-gradient(#d6e3fe, #b8cbf8);
}

.scroll-btn svg {
    margin: -1px;
    shape-rendering: auto;
}

.scroll-thumb {
    margin: 1px 5px 1px auto;
}

/* Data table */
.data-pane {
    width: 422px;
    padding-right: 1px;
    border-left: 2px solid #aca899;
    border-right: 2px solid #f8f7f0;
    background-color: #000;
}

.data-pane table {
    width: 100%;
    border-collapse: separate;
    border-spacing: 0;
    table-layout: fixed;
    color: #f0f0f0;
}

.data-pane th {
    height: 17px;
    padding: 0;
    border: 1px solid;
    border-color: #fff #807d70 #807d70 #fff;
    background-color: #ece9d8;
    color: #000;
    font-weight: normal;
    line-height: 15px;
}

.data-pane .value {
    width: 65px;
}

.data-pane td {
    height: 17px;
    padding: 0 0 0 1px;
    border-bottom: 1px dotted #c8c8c8;
    line-height: 16px;
    white-space: nowrap;
}

.data-pane td + td {
    border-left: 1px dotted #c8c8c8;
}

/* Status bar */
.statusbar {
    display: flex;
    align-items: center;
    gap: 3px;
    height: 19px;
    padding: 0 4px 0 3px;
    border-top: 1px solid #000;
    box-shadow: 0 -2px #fff;
}

.status-text {
    flex: 1;
}

.status-cell {
    height: 15px;
    padding-right: 2px;
    border: 1px solid;
    border-color: #aca899 #fff #fff #aca899;
    line-height: 13px;
    text-align: right;
}

.status-date { width: 135px; }
.status-value { width: 76px; }

.taskbar-edge {
    height: 1px;
    background: linear-gradient(90deg, #2f8a2f 92px, #245edb 92px);
}
```
